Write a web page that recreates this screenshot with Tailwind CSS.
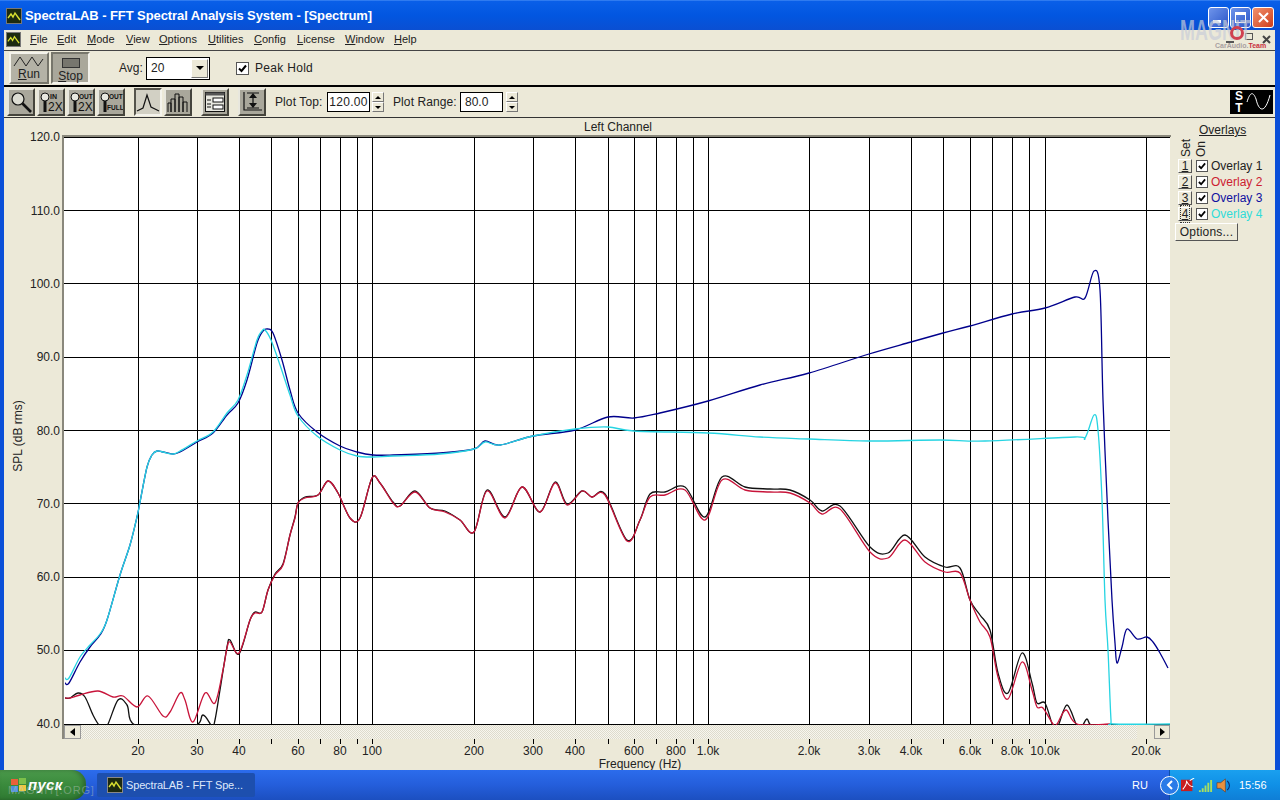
<!DOCTYPE html>
<html lang="en">
<head>
    <meta charset="UTF-8">
    <title>SpectraLAB - FFT Spectral Analysis System - [Spectrum]</title>
    <script src="https://cdn.jsdelivr.net/npm/@tailwindcss/browser@4"></script>
</head>
<body class="w-[1280px] h-[800px] overflow-hidden relative bg-[#245edb] font-['Liberation_Sans',Arial,sans-serif] text-[12px] text-[#222]">

    <!-- title bar -->
    <div class="h-[30px] flex items-center bg-gradient-to-b from-[#0a5fe8] via-[#0256e0] to-[#0a4fd2] border-t border-[#2f7bf0]">
        <div class="ml-[6px] w-[16px] h-[16px] bg-[#1c2a10] border border-[#777] flex items-center justify-center">
            <svg width="14" height="14" viewBox="0 0 14 14"><path d="M1 9 L4 5 L6 8 L8 4 L13 11" fill="none" stroke="#d8e030" stroke-width="1.4"/></svg>
        </div>
        <div class="ml-[3px] text-white font-bold text-[13px] tracking-[-0.08px] whitespace-nowrap">SpectraLAB - FFT Spectral Analysis System - [Spectrum]</div>
        <div class="ml-auto mr-[6px] mt-[3px] flex gap-[1px]">
            <div class="w-[21px] h-[21px] rounded-[3px] border border-white bg-gradient-to-br from-[#6f94ea] to-[#2b55c8] flex items-end p-[4px]"><div class="w-[8px] h-[3px] bg-white"></div></div>
            <div class="w-[21px] h-[21px] rounded-[3px] border border-white bg-gradient-to-br from-[#6f94ea] to-[#2b55c8] p-[4px]"><div class="w-full h-full border border-white border-t-[3px]"></div></div>
            <div class="w-[22px] h-[21px] rounded-[3px] border border-white bg-gradient-to-br from-[#f0906c] to-[#cf3b16] flex items-center justify-center">
                <svg width="13" height="13" viewBox="0 0 13 13"><path d="M2 2 L11 11 M11 2 L2 11" stroke="#fff" stroke-width="2"/></svg>
            </div>
        </div>
    </div>

    <!-- window body -->
    <div class="h-[740px] pl-[4px] pr-[5px] bg-[#0a4fd8]">
        <div class="h-full bg-[#ece9d8] flex flex-col">

            <!-- menu -->
            <div class="h-[21px] pb-[2px] flex items-center border-b border-[#444] text-[11px]">
                <div class="ml-[2px] w-[15px] h-[15px] bg-[#1c2a10] border border-[#777] flex items-center justify-center">
                    <svg width="13" height="13" viewBox="0 0 14 14"><path d="M1 9 L4 5 L6 8 L8 4 L13 11" fill="none" stroke="#d8e030" stroke-width="1.4"/></svg>
                </div>
                <div class="ml-[9px] w-[27px]"><u>F</u>ile</div>
                <div class="w-[30px]"><u>E</u>dit</div>
                <div class="w-[39px]"><u>M</u>ode</div>
                <div class="w-[33px]"><u>V</u>iew</div>
                <div class="w-[49px]"><u>O</u>ptions</div>
                <div class="w-[46px]"><u>U</u>tilities</div>
                <div class="w-[43px]"><u>C</u>onfig</div>
                <div class="w-[48px]"><u>L</u>icense</div>
                <div class="w-[49px]"><u>W</u>indow</div>
                <div><u>H</u>elp</div>
                <div class="ml-auto mr-[4px] flex items-center">
                    <div class="w-[8px] h-[2px] mt-[5px] bg-[#555]"></div>
                    <div class="ml-[11px] mb-[6px] w-[8px] h-[7px] border border-[#555]"></div>
                    <svg class="ml-[9px]" width="9" height="9" viewBox="0 0 9 9"><path d="M1 1 L8 8 M8 1 L1 8" stroke="#444" stroke-width="2"/></svg>
                </div>
            </div>

            <!-- run / stop toolbar -->
            <div class="h-[36px] flex items-center border-b-2 border-black">
                <div class="ml-[5px] w-[40px] h-[32px] bg-[#b4b2a6] border-2 border-t-[#f4f3ec] border-l-[#f4f3ec] border-r-[#77766c] border-b-[#77766c] flex flex-col items-center leading-[12px]">
                    <svg class="mt-[1px]" width="32" height="13" viewBox="0 0 32 13"><path d="M1 11 L7 2 L13 11 L19 2 L25 11 L30 4" fill="none" stroke="#222" stroke-width="1"/></svg>
                    <div class="text-[12px]"><u>R</u>un</div>
                </div>
                <div class="ml-[2px] w-[39px] h-[32px] bg-[#a9a79b] border-2 border-t-[#77766c] border-l-[#77766c] border-r-[#f4f3ec] border-b-[#f4f3ec] flex flex-col items-center pt-[4px] leading-[12px]">
                    <div class="w-[18px] h-[10px] bg-[#77766e] border border-[#333]"></div>
                    <div class="text-[12px] mt-[2px]"><u>S</u>top</div>
                </div>
                <div class="ml-[29px] w-[27px]">Avg:</div>
                <div class="w-[64px] h-[23px] bg-white border border-black flex items-center pl-[4px]">
                    <span>20</span>
                    <div class="ml-auto mr-[1px] w-[17px] h-[19px] bg-[#ece9d8] border border-t-white border-l-white border-r-[#777] border-b-[#777] flex items-center justify-center">
                        <div class="w-0 h-0 border-x-[4px] border-x-transparent border-t-[4px] border-t-black"></div>
                    </div>
                </div>
                <div class="ml-[26px] w-[13px] h-[13px] bg-white border border-[#555] flex items-center justify-center">
                    <svg width="9" height="9" viewBox="0 0 9 9"><path d="M1 4.5 L3.5 7 L8 1.5" fill="none" stroke="#000" stroke-width="2"/></svg>
                </div>
                <div class="ml-[6px] tracking-[0.3px]">Peak Hold</div>
            </div>

            <!-- plot toolbar -->
            <div class="h-[31px] flex items-center border-b border-[#333]">
                <button class="ml-[3px] w-[28px] h-[28px] bg-[#a9a79b] border-2 border-t-[#e8e7de] border-l-[#e8e7de] border-r-[#45443c] border-b-[#45443c] flex items-center justify-center">
                    <svg width="24" height="24" viewBox="0 0 24 24"><circle cx="9" cy="9" r="6" fill="#dcdcd2" stroke="#111" stroke-width="1.2"/><path d="M13.5 13.5 L22 22" stroke="#111" stroke-width="2.6"/></svg>
                </button>
                <button class="ml-[2px] w-[28px] h-[28px] bg-[#a9a79b] border-2 border-t-[#e8e7de] border-l-[#e8e7de] border-r-[#45443c] border-b-[#45443c] relative overflow-hidden">
                    <svg class="absolute left-0 top-0" width="24" height="24" viewBox="0 0 24 24"><circle cx="6" cy="7" r="4" fill="#e8e8e0" stroke="#111"/><path d="M6 11 L6 22" stroke="#111" stroke-width="3"/><text x="11" y="9" font-size="7" font-weight="bold" fill="#111">IN</text><text x="9" y="21" font-size="12" fill="#111">2X</text></svg>
                </button>
                <button class="ml-[2px] w-[28px] h-[28px] bg-[#a9a79b] border-2 border-t-[#e8e7de] border-l-[#e8e7de] border-r-[#45443c] border-b-[#45443c] relative overflow-hidden">
                    <svg class="absolute left-0 top-0" width="24" height="24" viewBox="0 0 24 24"><circle cx="6" cy="7" r="4" fill="#e8e8e0" stroke="#111"/><path d="M6 11 L6 22" stroke="#111" stroke-width="3"/><text x="10" y="9" font-size="6.5" font-weight="bold" fill="#111">OUT</text><text x="9" y="21" font-size="12" fill="#111">2X</text></svg>
                </button>
                <button class="ml-[2px] w-[28px] h-[28px] bg-[#a9a79b] border-2 border-t-[#e8e7de] border-l-[#e8e7de] border-r-[#45443c] border-b-[#45443c] relative overflow-hidden">
                    <svg class="absolute left-0 top-0" width="24" height="24" viewBox="0 0 24 24"><circle cx="6" cy="7" r="4" fill="#e8e8e0" stroke="#111"/><path d="M6 11 L6 22" stroke="#111" stroke-width="3"/><text x="10" y="9" font-size="6.5" font-weight="bold" fill="#111">OUT</text><text x="8" y="20" font-size="6.5" font-weight="bold" fill="#111">FULL</text></svg>
                </button>
                <button class="ml-[9px] w-[28px] h-[28px] bg-[#d2d0c4] border-2 border-t-[#55544c] border-l-[#55544c] border-r-[#f4f3ec] border-b-[#f4f3ec] flex items-center justify-center">
                    <svg width="24" height="24" viewBox="0 0 24 24"><path d="M1 21 L7 18 L11 5 L15 17 L19 19 L23 21" fill="none" stroke="#111" stroke-width="1.2"/></svg>
                </button>
                <button class="ml-[2px] w-[28px] h-[28px] bg-[#a9a79b] border-2 border-t-[#e8e7de] border-l-[#e8e7de] border-r-[#45443c] border-b-[#45443c] flex items-center justify-center">
                    <svg width="24" height="24" viewBox="0 0 24 24"><path d="M2 22 V13 H5 V22 M5 22 V9 H9 V22 M9 22 V4 H13 V22 M13 22 V7 H17 V22 M17 22 V12 H21 V22" fill="none" stroke="#111" stroke-width="1"/></svg>
                </button>
                <button class="ml-[9px] w-[28px] h-[28px] bg-[#a9a79b] border-2 border-t-[#e8e7de] border-l-[#e8e7de] border-r-[#45443c] border-b-[#45443c] flex items-center justify-center">
                    <svg width="22" height="22" viewBox="0 0 22 22"><rect x="1.5" y="1.5" width="19" height="19" fill="#e8e8e0" stroke="#111"/><rect x="1.5" y="1.5" width="19" height="3" fill="#555"/><rect x="9" y="7" width="10" height="4" fill="#fff" stroke="#111"/><rect x="9" y="14" width="10" height="4" fill="#fff" stroke="#111"/><path d="M3 9 H7 M3 13 H7 M3 16 H7" stroke="#111"/></svg>
                </button>
                <button class="ml-[9px] w-[28px] h-[28px] bg-[#a9a79b] border-2 border-t-[#e8e7de] border-l-[#e8e7de] border-r-[#45443c] border-b-[#45443c] flex items-center justify-center">
                    <svg width="24" height="24" viewBox="0 0 24 24"><path d="M4 2 V20 H22 M7 3 H19 M7 18 H19 M13 4 V17" fill="none" stroke="#111" stroke-width="1.2"/><path d="M13 3 L9 8 H17 Z M13 18 L9 13 H17 Z" fill="#111"/></svg>
                </button>
                <div class="ml-[9px] w-[52px] tracking-[0.1px]">Plot Top:</div>
                <div class="w-[43px] h-[20px] bg-white border border-black flex items-center justify-center tracking-[0.3px]">120.00</div>
                <div class="ml-[2px] w-[12px] h-[20px] flex flex-col">
                    <div class="h-[10px] bg-[#ece9d8] border border-t-white border-l-white border-r-[#777] border-b-[#777] flex items-center justify-center"><div class="w-0 h-0 border-x-[3px] border-x-transparent border-b-[3px] border-b-black"></div></div>
                    <div class="h-[10px] bg-[#ece9d8] border border-t-white border-l-white border-r-[#777] border-b-[#777] flex items-center justify-center"><div class="w-0 h-0 border-x-[3px] border-x-transparent border-t-[3px] border-t-black"></div></div>
                </div>
                <div class="ml-[9px] w-[67px] tracking-[0.1px]">Plot Range:</div>
                <div class="w-[43px] h-[20px] bg-white border border-black flex items-center pl-[4px]">80.0</div>
                <div class="ml-[3px] w-[12px] h-[20px] flex flex-col">
                    <div class="h-[10px] bg-[#ece9d8] border border-t-white border-l-white border-r-[#777] border-b-[#777] flex items-center justify-center"><div class="w-0 h-0 border-x-[3px] border-x-transparent border-b-[3px] border-b-black"></div></div>
                    <div class="h-[10px] bg-[#ece9d8] border border-t-white border-l-white border-r-[#777] border-b-[#777] flex items-center justify-center"><div class="w-0 h-0 border-x-[3px] border-x-transparent border-t-[3px] border-t-black"></div></div>
                </div>
                <div class="ml-auto mr-[2px] w-[43px] h-[24px] bg-black">
                    <svg width="43" height="24" viewBox="0 0 43 24"><text x="9" y="10" font-size="12" font-weight="bold" fill="#fff" text-anchor="middle">S</text><text x="9" y="22" font-size="12" font-weight="bold" fill="#fff" text-anchor="middle">T</text><path d="M17 12 C20 2 23 1 26 9 C29 22 35 24 40 5" stroke="#fff" stroke-width="1" fill="none"/></svg>
                </div>
            </div>

            <!-- plot + overlays -->
            <div class="flex-1 flex min-h-0">
                <svg id="plot" class="w-[1170px] h-[652px] shrink-0" viewBox="4 118 1170 652" font-size="12" fill="#222">
                    <defs>
                        <pattern id="hatch" width="2" height="2" patternUnits="userSpaceOnUse">
                            <rect width="2" height="2" fill="#f7f6ee"/>
                            <rect width="1" height="1" fill="#dedbcd"/>
                            <rect x="1" y="1" width="1" height="1" fill="#dedbcd"/>
                        </pattern>
                        <clipPath id="plotClip"><rect x="64" y="137" width="1106" height="588"/></clipPath>
                    </defs>
                    <rect x="64" y="137" width="1106" height="587" fill="#fff"/>
                    <path d="M63 739 V136 H1171" fill="none" stroke="#8a887c" stroke-width="2"/>
                    <g id="grid" stroke="#000" stroke-width="1" fill="none"></g>
                    <g id="curves" clip-path="url(#plotClip)" fill="none" stroke-width="1.3" stroke-linejoin="round"></g>
                    <g id="labels"></g>
                    <rect x="64" y="725" width="1106" height="14" fill="url(#hatch)"/>
                    <rect x="64.5" y="725.5" width="16" height="13" fill="#ece9d8" stroke="#999"/>
                    <path d="M75 728 L70 732 L75 736 Z" fill="#000"/>
                    <rect x="1137" y="725" width="17" height="14" fill="#ece9d8"/>
                    <rect x="1154.5" y="725.5" width="15" height="13" fill="#ece9d8" stroke="#999"/>
                    <path d="M1160 728 L1165 732 L1160 736 Z" fill="#000"/>
                    <text x="618" y="131" text-anchor="middle">Left Channel</text>
                    <text x="640" y="768" text-anchor="middle">Frequency (Hz)</text>
                    <text transform="translate(22 436) rotate(-90)" text-anchor="middle">SPL (dB rms)</text>
                </svg>

                <div class="flex-1 pl-[1px] pt-[5px]">
                    <div class="ml-[24px] underline leading-[14px]">Overlays</div>
                    <div class="flex h-[21px] ml-[3px] items-start">
                        <div class="w-[15px] h-[20px] flex items-end justify-center"><span class="[writing-mode:vertical-rl] rotate-180 leading-[14px]">Set</span></div>
                        <div class="w-[15px] h-[20px] flex items-end justify-center"><span class="[writing-mode:vertical-rl] rotate-180 leading-[14px]">On</span></div>
                    </div>
                    <div class="flex items-center h-[16px] ml-[3px]">
                        <div class="w-[14px] h-[14px] bg-[#ece9d8] border border-t-white border-l-white border-r-[#555] border-b-[#555] flex items-center justify-center"><u>1</u></div>
                        <div class="ml-[4px] w-[12px] h-[12px] bg-white border border-[#555] flex items-center justify-center"><svg width="8" height="8" viewBox="0 0 9 9"><path d="M1 4.5 L3.5 7 L8 1.5" fill="none" stroke="#000" stroke-width="2"/></svg></div>
                        <div class="ml-[3px] text-[#222]">Overlay 1</div>
                    </div>
                    <div class="flex items-center h-[16px] ml-[3px]">
                        <div class="w-[14px] h-[14px] bg-[#ece9d8] border border-t-white border-l-white border-r-[#555] border-b-[#555] flex items-center justify-center"><u>2</u></div>
                        <div class="ml-[4px] w-[12px] h-[12px] bg-white border border-[#555] flex items-center justify-center"><svg width="8" height="8" viewBox="0 0 9 9"><path d="M1 4.5 L3.5 7 L8 1.5" fill="none" stroke="#000" stroke-width="2"/></svg></div>
                        <div class="ml-[3px] text-[#cc2030]">Overlay 2</div>
                    </div>
                    <div class="flex items-center h-[16px] ml-[3px]">
                        <div class="w-[14px] h-[14px] bg-[#ece9d8] border border-t-white border-l-white border-r-[#555] border-b-[#555] flex items-center justify-center"><u>3</u></div>
                        <div class="ml-[4px] w-[12px] h-[12px] bg-white border border-[#555] flex items-center justify-center"><svg width="8" height="8" viewBox="0 0 9 9"><path d="M1 4.5 L3.5 7 L8 1.5" fill="none" stroke="#000" stroke-width="2"/></svg></div>
                        <div class="ml-[3px] text-[#1010a0]">Overlay 3</div>
                    </div>
                    <div class="flex items-center h-[16px] ml-[3px]">
                        <div class="w-[14px] h-[14px] bg-[#ece9d8] border border-t-white border-l-white border-r-[#555] border-b-[#555] flex items-center justify-center"><span class="underline outline-1 outline-dotted outline-[#333] -outline-offset-1 px-[2px]">4</span></div>
                        <div class="ml-[4px] w-[12px] h-[12px] bg-white border border-[#555] flex items-center justify-center"><svg width="8" height="8" viewBox="0 0 9 9"><path d="M1 4.5 L3.5 7 L8 1.5" fill="none" stroke="#000" stroke-width="2"/></svg></div>
                        <div class="ml-[3px] text-[#30dcd8]">Overlay 4</div>
                    </div>
                    <div class="mt-[1px] w-[63px] h-[18px] bg-[#ece9d8] border border-t-white border-l-white border-r-[#555] border-b-[#555] flex items-center justify-center tracking-[0.2px]">Options...</div>
                </div>
            </div>
        </div>
    </div>

    <!-- taskbar -->
    <div class="h-[30px] flex items-center bg-gradient-to-b from-[#2c6cec] via-[#245edb] to-[#1c4fc0] text-white">
        <div class="w-[86px] h-full rounded-r-[14px] bg-gradient-to-b from-[#4b9a4b] via-[#3a8a3c] to-[#2f7a32] flex items-center pl-[11px] shadow-[inset_-3px_0_4px_rgba(0,0,0,0.25)]">
            <svg width="15" height="15" viewBox="0 0 15 15"><rect x="0" y="1" width="7" height="6" fill="#e8603a"/><rect x="8" y="0" width="7" height="6" fill="#7cc04a"/><rect x="0" y="8" width="7" height="6" fill="#4a90e0"/><rect x="8" y="7" width="7" height="6" fill="#f0c840"/></svg>
            <span class="ml-[2px] font-bold italic text-[15px] tracking-[0.3px]">пуск</span>
        </div>
        <div class="ml-[11px] w-[158px] h-[24px] rounded-[2px] bg-[#1d4fae] flex items-center pl-[10px] text-[11px] text-[#dfe8fa]">
            <div class="w-[16px] h-[16px] bg-[#1c2a10] border border-[#888] flex items-center justify-center">
                <svg width="14" height="14" viewBox="0 0 14 14"><path d="M1 9 L4 5 L6 8 L8 4 L13 11" fill="none" stroke="#d8e030" stroke-width="1.4"/></svg>
            </div>
            <span class="ml-[3px] tracking-[-0.15px] whitespace-nowrap">SpectraLAB - FFT Spe...</span>
        </div>
        <div class="ml-auto mr-[21px] text-[11px]">RU</div>
        <div class="w-[111px] h-full bg-gradient-to-b from-[#1aa0ef] via-[#1090e6] to-[#0f7ed6] flex items-center border-l border-[#0c4fa8] relative text-[11px]">
            <div class="absolute -left-[10px] w-[19px] h-[19px] rounded-full bg-[#2a7be8] border border-white flex items-center justify-center">
                <svg width="10" height="10" viewBox="0 0 10 10"><path d="M7 1 L3 5 L7 9" fill="none" stroke="#fff" stroke-width="2"/></svg>
            </div>
            <svg class="ml-[11px]" width="14" height="14" viewBox="0 0 16 16"><rect x="0" y="2" width="13" height="13" fill="#c81e1e"/><path d="M2 13 C6 8 7 5 6 3 C9 9 11 10 14 10 M10 3 L15 0" fill="none" stroke="#fff" stroke-width="1.2"/></svg>
            <svg class="ml-[3px]" width="15" height="15" viewBox="0 0 16 16"><path d="M1 13 h2 v2 h-2 Z M4 11 h2 v4 h-2 Z M7 8 h2 v7 h-2 Z M10 5 h2 v10 h-2 Z M13 2 h2 v13 h-2 Z" fill="#a8e060"/></svg>
            <svg class="ml-[3px]" width="15" height="15" viewBox="0 0 16 16"><path d="M1 5 H5 L10 1 V15 L5 11 H1 Z" fill="#e89040" stroke="#703010" stroke-width="0.6"/><path d="M12 3 C15 6 15 10 12 13" fill="none" stroke="#0a2a70" stroke-width="1.3"/></svg>
            <div class="ml-[8px]">15:56</div>
        </div>
    </div>

    <!-- watermarks over the picture -->
    <div class="absolute left-[1180px] top-[12px] w-[80px] h-[36px] pointer-events-none">
        <div class="text-[29px] leading-[36px] text-[#c8cdd8]/70 font-bold whitespace-nowrap origin-left scale-x-[0.62]">MAGNIT</div>
        <div class="absolute left-[50px] top-[14px] w-[14px] h-[14px] rounded-full border-[3px] border-[#d04050]"></div>
        <div class="absolute left-[35px] top-[29px] font-bold text-[7px] leading-[10px] text-[#a8a0a0] whitespace-nowrap">CarAudio.<span class="text-[#c83040]">Team</span></div>
    </div>
    <div class="absolute left-[8px] top-[782px] text-[11px] tracking-[0.8px] text-[#bcc8c0]/45 whitespace-nowrap pointer-events-none">MAGNIT[.ORG]</div>

    <script>
        const NS = "http://www.w3.org/2000/svg";

        // pixel position of each frequency line on the plot
        const xLines = [138,197,239,271,298,320,340,357,372,474,533,575,608,634,656,676,693,708,809,869,911,943,970,992,1012,1029,1045,1146];
        const yLines = [[137,"120.0"],[210.5,"110.0"],[283.5,"100.0"],[357,"90.0"],[430.5,"80.0"],[503.5,"70.0"],[577,"60.0"],[650,"50.0"],[724,"40.0"]];
        const xLabels = {138:"20",197:"30",239:"40",298:"60",340:"80",372:"100",474:"200",533:"300",575:"400",634:"600",676:"800",708:"1.0k",809:"2.0k",869:"3.0k",911:"4.0k",970:"6.0k",1012:"8.0k",1045:"10.0k",1146:"20.0k"};

        function add(parent, tag, attrs, text) {
            const el = document.createElementNS(NS, tag);
            for (const k in attrs) el.setAttribute(k, attrs[k]);
            if (text) el.textContent = text;
            parent.appendChild(el);
            return el;
        }

        const grid = document.getElementById("grid");
        const labels = document.getElementById("labels");

        xLines.forEach(x => {
            add(grid, "line", {x1: x + .5, x2: x + .5, y1: 137, y2: 724});
            add(grid, "line", {x1: x + .5, x2: x + .5, y1: 739, y2: 744});
            if (xLabels[x]) add(labels, "text", {x: x, y: 755, "text-anchor": "middle"}, xLabels[x]);
        });
        yLines.forEach(([y, t]) => {
            add(grid, "line", {x1: 64, x2: 1170, y1: Math.floor(y) + .5, y2: Math.floor(y) + .5});
            add(labels, "text", {x: 60, y: y + 4, "text-anchor": "end"}, t);
        });

        // smooth line through the points
        function smooth(p) {
            let d = `M${p[0][0]} ${p[0][1]}`;
            for (let i = 0; i < p.length - 1; i++) {
                const a = p[i - 1] || p[i], b = p[i], c = p[i + 1], e = p[i + 2] || c;
                d += ` C${b[0] + (c[0] - a[0]) / 6} ${b[1] + (c[1] - a[1]) / 6} ${c[0] - (e[0] - b[0]) / 6} ${c[1] - (e[1] - b[1]) / 6} ${c[0]} ${c[1]}`;
            }
            return d;
        }

        const midRed = [[255,613],[262,612],[268,590],[275,575],[283,565],[290,535],[295,518],[298,503],[305,498],[318,495],[328,481],[338,493],[350,518],[360,518],[372,478],[380,483],[393,503],[400,506],[415,492],[430,508],[445,512],[460,520],[474,532],[487,491],[505,518],[522,487],[540,512],[555,483],[567,505],[582,491],[592,497],[605,495],[627,541],[640,520],[650,497],[665,495],[685,490],[705,520],[722,480],[745,490],[770,492],[790,493],[810,503],[822,514],[840,509],[870,552],[888,558],[905,540],[925,562],[945,572],[960,573]];
        // the black trace sits a little above the red one from about 600 Hz up
        const midBlack = midRed.map(([x, y]) => [x, x > 860 ? y - 5 : x > 640 ? y - 3 : y - (x % 2)]);

        const black = [[65,698],[70,698],[78,693],[85,697],[93,715],[100,726],[107,726],[118,700],[127,705],[137,726],[193,726],[203,715],[212,726],[215,720],[220,690],[227,647],[230,640],[239,654],[250,620],...midBlack,[970,600],[980,615],[990,630],[998,673],[1008,693],[1022,653],[1032,683],[1037,703],[1045,703],[1053,726],[1058,726],[1067,705],[1077,726],[1082,726],[1087,719],[1092,726],[1110,726]];
        const red = [[65,698],[70,698],[80,695],[98,691],[113,697],[123,696],[137,707],[148,696],[163,716],[170,712],[180,693],[185,700],[193,722],[205,693],[215,703],[223,670],[227,648],[230,642],[239,653],[250,620],...midRed,[970,600],[980,622],[990,637],[998,677],[1008,699],[1022,662],[1032,690],[1037,707],[1043,708],[1053,724],[1057,724],[1066,710],[1077,724],[1110,724]];
        const blue = [[65,683],[69,683],[80,662],[90,647],[100,635],[107,620],[120,575],[130,545],[137,517],[140,502],[147,467],[152,455],[157,451],[163,452],[173,454],[180,452],[197,442],[213,433],[227,415],[238,403],[247,380],[257,343],[263,331],[268,329],[273,333],[282,360],[290,390],[298,413],[317,432],[340,446],[357,452],[373,455],[393,455],[440,453],[474,449],[485,441],[500,445],[533,436],[575,430],[608,417],[634,418],[660,413],[708,401],[760,385],[809,373],[869,354],[911,342],[943,333],[970,326],[1012,314],[1045,308],[1075,297],[1085,298],[1094,271],[1100,290],[1103,400],[1108,520],[1112,600],[1115,643],[1117,663],[1122,647],[1127,629],[1137,639],[1147,637],[1153,642],[1160,653],[1168,668]];
        const cyan = [[65,678],[69,678],[80,657],[90,645],[100,634],[107,620],[120,575],[130,545],[137,517],[140,502],[147,467],[152,455],[157,451],[163,452],[173,454],[180,451],[197,441],[213,432],[227,413],[238,400],[247,375],[257,340],[262,331],[265,330],[271,340],[280,365],[290,395],[298,416],[317,436],[340,450],[357,456],[373,457],[393,456],[440,454],[474,449],[485,442],[500,445],[533,436],[575,429],[608,427],[634,431],[708,433],[760,437],[809,439],[869,441],[940,440],[985,441],[1075,437],[1085,438],[1094,415],[1098,430],[1102,500],[1105,600],[1108,650],[1111,720],[1113,724],[1170,724]];

        const curves = document.getElementById("curves");
        [[black,"#111"],[red,"#c8143a"],[blue,"#00008c"],[cyan,"#26d4e2"]].forEach(([pts, color]) => {
            add(curves, "path", {d: smooth(pts), stroke: color});
        });
    </script>
</body>
</html>
